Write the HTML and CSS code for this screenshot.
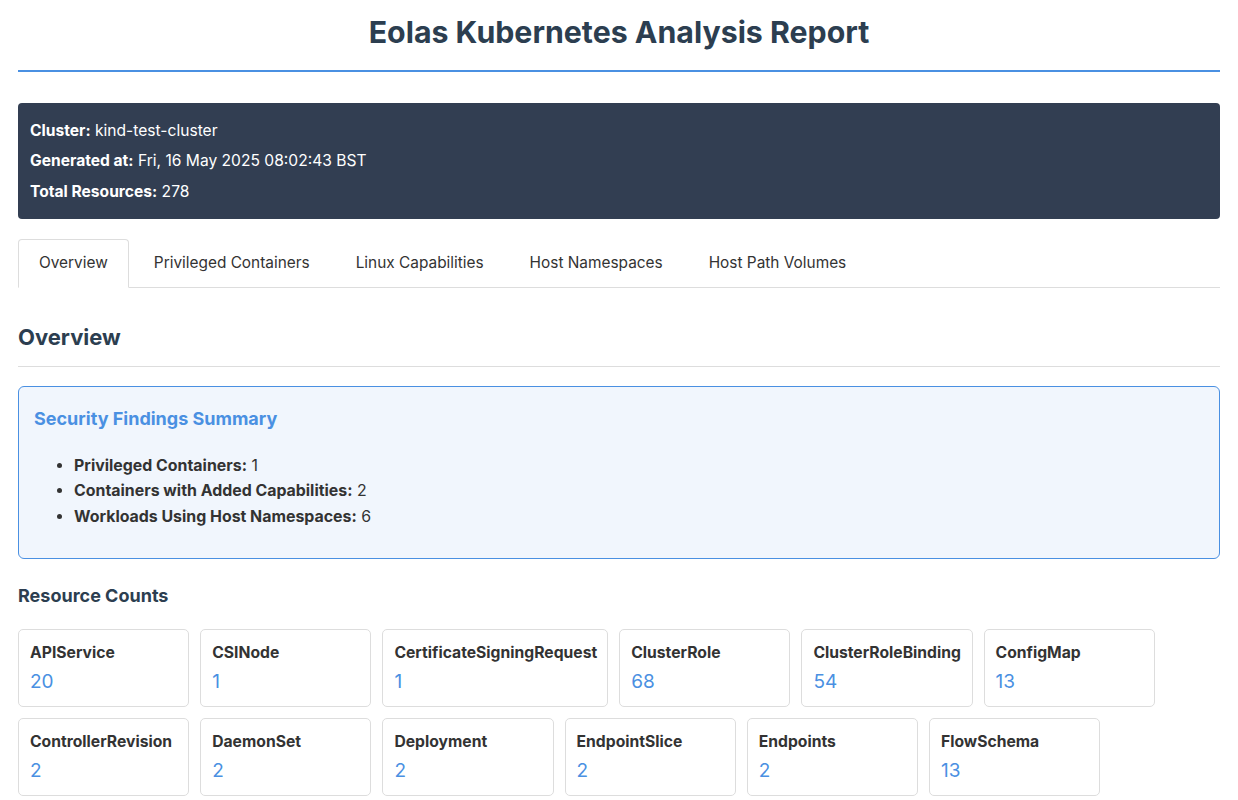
FILE: index.html
```html
<!DOCTYPE html>
<html lang="en">
<head>
<meta charset="utf-8">
<title>Eolas Kubernetes Analysis Report</title>
<link rel="stylesheet" href="styles.css">
</head>
<body>
<div class="container">
  <h1 class="title">Eolas Kubernetes Analysis Report</h1>
  <div class="info">
    <p><strong>Cluster:</strong> kind-test-cluster</p>
    <p><strong>Generated at:</strong> Fri, 16 May 2025 08:02:43 BST</p>
    <p><strong>Total Resources:</strong> 278</p>
  </div>
  <div class="tabs">
    <div class="tab active">Overview</div>
    <div class="tab">Privileged Containers</div>
    <div class="tab">Linux Capabilities</div>
    <div class="tab">Host Namespaces</div>
    <div class="tab">Host Path Volumes</div>
  </div>
  <h2 class="section-title">Overview</h2>
  <div class="summary">
    <h3>Security Findings Summary</h3>
    <ul>
      <li><strong>Privileged Containers:</strong> 1</li>
      <li><strong>Containers with Added Capabilities:</strong> 2</li>
      <li><strong>Workloads Using Host Namespaces:</strong> 6</li>
    </ul>
  </div>
  <h4 class="counts-title">Resource Counts</h4>
  <div class="cards">
    <div class="card"><div class="label">APIService</div><div class="num">20</div></div>
    <div class="card"><div class="label">CSINode</div><div class="num">1</div></div>
    <div class="card"><div class="label">CertificateSigningRequest</div><div class="num">1</div></div>
    <div class="card"><div class="label">ClusterRole</div><div class="num">68</div></div>
    <div class="card"><div class="label">ClusterRoleBinding</div><div class="num">54</div></div>
    <div class="card"><div class="label">ConfigMap</div><div class="num">13</div></div>
    <div class="card"><div class="label">ControllerRevision</div><div class="num">2</div></div>
    <div class="card"><div class="label">DaemonSet</div><div class="num">2</div></div>
    <div class="card"><div class="label">Deployment</div><div class="num">2</div></div>
    <div class="card"><div class="label">EndpointSlice</div><div class="num">2</div></div>
    <div class="card"><div class="label">Endpoints</div><div class="num">2</div></div>
    <div class="card"><div class="label">FlowSchema</div><div class="num">13</div></div>
  </div>
</div>
</body>
</html>
```
FILE: styles.css
```css
* { box-sizing: border-box; }
body {
  margin: 0;
  font-family: Inter, "Noto Sans", "Liberation Sans", sans-serif;
  color: #333;
  background: #fff;
}
.container {
  max-width: 1202px;
  margin: 0 auto;
  padding-top: 14px;
}
.title {
  margin: 0;
  text-align: center;
  font-size: 30.3px;
  font-weight: 700;
  color: #2c3e50;
  padding-bottom: 20px;
  border-bottom: 2px solid #4a90e2;
}
.info {
  margin-top: 31px;
  background: #323e52;
  color: #fff;
  border-radius: 4px;
  padding: 12px 12px;
  font-size: 15.6px;
}
.info p { margin: 0; line-height: 30.3px; }
.info p:first-child { padding-top: 1px; }
.info strong { font-weight: 700; }
.tabs {
  display: flex;
  margin-top: 20px;
  border-bottom: 1px solid #ddd;
}
.tab {
  padding: 14px 20px 15px;
  font-size: 15.4px;
  color: #333;
  border: 1px solid transparent;
  border-bottom: none;
  border-radius: 4px 4px 0 0;
  margin-bottom: -1px;
  margin-right: 4px;
  line-height: 18px;
}
.tab.active {
  background: #fff;
  border-color: #ddd;
  border-bottom: 1px solid #fff;
}
.section-title {
  margin: 36px 0 0;
  font-size: 22px;
  font-weight: 700;
  color: #2c3e50;
  padding-bottom: 16px;
  border-bottom: 1px solid #ddd;
}
.summary {
  margin-top: 19px;
  background: #f1f6fd;
  border: 1px solid #4a90e2;
  border-radius: 6px;
  padding: 21px 15px 29px;
}
.summary h3 {
  margin: 0;
  font-size: 18px;
  font-weight: 700;
  color: #4a90e2;
}
.summary ul {
  margin: 24px 0 0;
  padding-left: 40px;
  font-size: 15.9px;
  color: #333;
}
.summary li { line-height: 25.5px; }
.counts-title {
  margin: 26px 0 0;
  font-size: 18px;
  font-weight: 700;
  color: #2c3e50;
}
.cards {
  display: flex;
  flex-wrap: wrap;
  gap: 11px;
  margin-top: 23px;
}
.card {
  min-width: 171.2px;
  border: 1px solid #ddd;
  border-radius: 5px;
  padding: 12px 10px 12px 11px;
}
.label {
  font-size: 15.7px;
  font-weight: 700;
  color: #333;
  line-height: 22px;
}
.num {
  font-size: 19px;
  color: #4a90e2;
  line-height: 24px;
  margin-top: 6px;
}
```
